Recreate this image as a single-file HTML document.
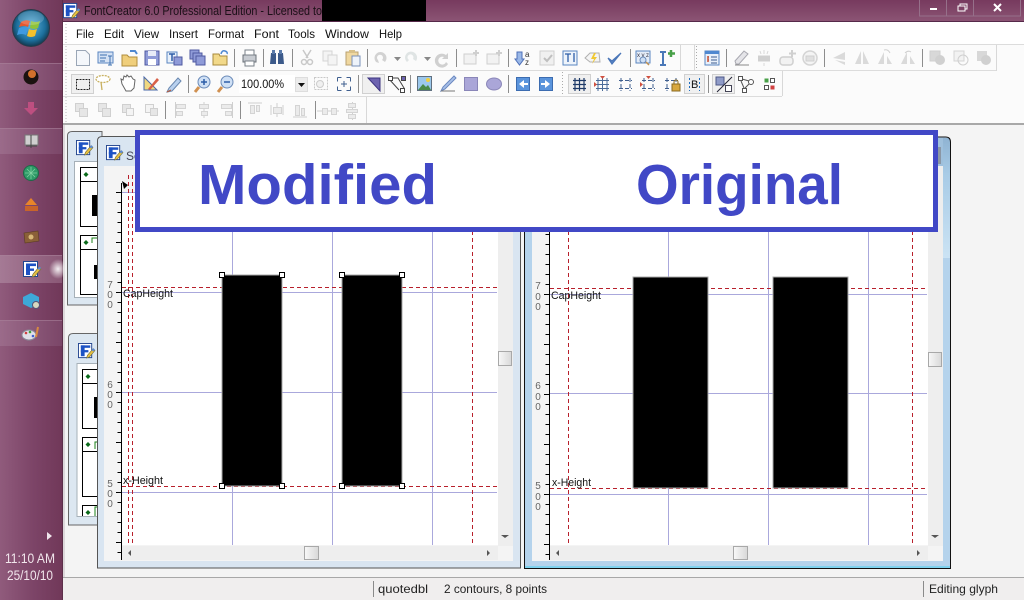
<!DOCTYPE html>
<html lang="en">
<head>
<meta charset="utf-8">
<title>FontCreator 6.0 Professional Edition</title>
<style>
html,body{margin:0;padding:0;background:#f4f4f4;width:1024px;height:600px;overflow:hidden}
svg{display:block}
text{font-family:"Liberation Sans",sans-serif}
</style>
</head>
<body>
<svg width="1024" height="600" viewBox="0 0 1024 600" xmlns="http://www.w3.org/2000/svg">
<defs>
<linearGradient id="side" x1="0" x2="1" y1="0" y2="0"><stop offset="0" stop-color="#905b7c"/><stop offset=".55" stop-color="#7c4467"/><stop offset="1" stop-color="#713859"/></linearGradient>
<linearGradient id="band" x1="0" x2="1" y1="0" y2="0"><stop offset="0" stop-color="#9b6b8a"/><stop offset="1" stop-color="#7b4668"/></linearGradient>
<linearGradient id="bandF" x1="0" x2="1" y1="0" y2="0"><stop offset="0" stop-color="#a57a95"/><stop offset="1" stop-color="#8a5876"/></linearGradient>
<radialGradient id="glow"><stop offset="0" stop-color="#fff" stop-opacity=".9"/><stop offset="1" stop-color="#fff" stop-opacity="0"/></radialGradient>
<linearGradient id="title" x1="0" x2="0" y1="0" y2="1"><stop offset="0" stop-color="#773a5e"/><stop offset="1" stop-color="#8b5474"/></linearGradient>
<radialGradient id="orb" cx=".5" cy=".45" r=".55"><stop offset="0" stop-color="#5fb3df"/><stop offset=".7" stop-color="#1c6f9c"/><stop offset="1" stop-color="#12384f"/></radialGradient>
<linearGradient id="frameR" x1="0" x2="0" y1="0" y2="1"><stop offset="0" stop-color="#8fb3d2"/><stop offset=".3" stop-color="#a8cbe6"/><stop offset="1" stop-color="#cbe3f4"/></linearGradient>
<linearGradient id="thumb" x1="0" x2="1" y1="0" y2="0"><stop offset="0" stop-color="#f8f8f8"/><stop offset="1" stop-color="#d8d8d8"/></linearGradient>
<symbol id="fc" viewBox="0 0 18 18" overflow="visible">
<rect x=".5" y=".5" width="14" height="15" fill="#fff" stroke="#23458f"/>
<rect x="3" y="2.5" width="10" height="2.6" fill="#1d52c4"/><rect x="3" y="2.5" width="4" height="11.5" fill="#1d52c4"/><rect x="3" y="7.5" width="8" height="2.4" fill="#1d52c4"/>
<path d="M9 16l1-3 6-7 2 2-6 7z" fill="#e8c040" stroke="#6a6a3a" stroke-width=".6"/>
<path d="M14.5 7.5l2-2 1.500 1.500-2 2z" fill="#5a8ad8"/>
</symbol>
</defs>

<!-- page -->
<rect width="1024" height="600" fill="#f4f4f4"/>

<!-- sidebar -->
<rect x="0" y="0" width="62" height="600" fill="url(#side)"/>
<rect x="0" y="63" width="62" height="27" fill="url(#band)"/>
<rect x="0" y="128" width="62" height="26" fill="url(#band)"/>
<rect x="0" y="255" width="62" height="28" fill="url(#bandF)"/>
<rect x="0" y="320" width="62" height="26" fill="url(#band)"/>
<path d="M0 63.500h62M0 128.500h62M0 255.500h62M0 320.500h62" stroke="#a98099" stroke-opacity=".6"/>
<rect x="62" y="0" width="1" height="600" fill="#5d2f4a"/>
<rect x="63" y="0" width="2" height="600" fill="#dcd8da"/>
<ellipse cx="58" cy="269" rx="9" ry="10" fill="url(#glow)"/>
<!-- orb -->
<circle cx="31" cy="28" r="18.500" fill="url(#orb)" stroke="#2b3a48"/>
<path d="M21 22q5-3 9-1l-2 6q-4-2-9 0z" fill="#e4572e"/>
<path d="M31 21q5 2 9 0l-2 7q-4 2-8 0z" fill="#8fc33a"/>
<path d="M19 28q5-2 9 0l-2 7q-4-2-9 0z" fill="#3f9ae0"/>
<path d="M29 29q4 2 8 0l-2 7q-4 2-8 0z" fill="#f5c12c"/>
<ellipse cx="31" cy="18" rx="13" ry="7" fill="#fff" opacity=".18"/>
<!-- sidebar icons -->
<circle cx="31" cy="77" r="7.500" fill="#1a1210"/><circle cx="32" cy="74" r="4" fill="#d2702c"/>
<path d="M28 102h6v6h4l-7 7-7-7h4z" fill="#bd4f80"/>
<rect x="25" y="135" width="13" height="10" fill="#cfcfcf" stroke="#777"/><path d="M31 135v13M26 146h11" stroke="#444" fill="none"/>
<circle cx="31" cy="173" r="7.500" fill="#2f9a68" stroke="#1d6a48"/><path d="M31 167v12M25 173h12M27 169l8 8M35 169l-8 8" stroke="#7fd0a0" stroke-width=".8"/>
<path d="M31 198l6 7h-12z" fill="#e8852a"/><rect x="25" y="206" width="13" height="5" fill="#c8642a"/>
<path d="M24 233l14-2 1 10-14 2z" fill="#8a6038" stroke="#5a3c20" stroke-width=".6"/><circle cx="31" cy="237" r="2.500" fill="#d8b878"/>
<use href="#fc" x="23" y="261" width="18" height="18"/>
<path d="M23 297l8-4 8 4v7l-8 4-8-4z" fill="#3ea8d8"/><circle cx="36" cy="305" r="3.500" fill="#d8d8c0" stroke="#557"/>
<ellipse cx="29" cy="335" rx="7" ry="5" fill="#e0e0e8" stroke="#8a8a98"/><circle cx="26" cy="333" r="1.300" fill="#d04040"/><circle cx="30" cy="332" r="1.300" fill="#40a040"/><circle cx="33" cy="336" r="1.300" fill="#4060d0"/><path d="M36 337l2-10" stroke="#d88a40" stroke-width="2"/>
<path d="M47 532l5 4-5 4z" fill="#f0e6ec"/>
<text x="30" y="563" text-anchor="middle" font-size="13.500" fill="#f1e6ec" textLength="50" lengthAdjust="spacingAndGlyphs">11:10 AM</text>
<text x="30" y="580" text-anchor="middle" font-size="13.500" fill="#f1e6ec" textLength="46" lengthAdjust="spacingAndGlyphs">25/10/10</text>

<!-- title bar -->
<rect x="63" y="0" width="961" height="21" fill="url(#title)"/>
<rect x="63" y="21" width="961" height="1" fill="#56294a"/>
<use href="#fc" x="63" y="3" width="17" height="17"/>
<text x="84" y="15" font-size="13" fill="#1c1018" textLength="238" lengthAdjust="spacingAndGlyphs">FontCreator 6.0 Professional Edition - Licensed to</text>
<rect x="322" y="0" width="104" height="21" fill="#000"/>
<path d="M919.500 0v16h101V0M946.500 0v16M973.500 0v16" fill="none" stroke="#96708a"/>
<rect x="930" y="8" width="7" height="2" fill="#fff"/>
<rect x="958" y="6" width="7" height="5" fill="none" stroke="#fff"/><path d="M960 6V4h7v5h-2" fill="none" stroke="#fff"/>
<path d="M994 4l7 7M1001 4l-7 7" stroke="#fff" stroke-width="2"/>

<!-- menu -->
<rect x="63" y="22" width="961" height="23" fill="#fff"/>
<path d="M66 24v20" stroke="#bbb" stroke-dasharray="1 2"/>
<g font-size="12" fill="#111">
<text x="76" y="38" textLength="18" lengthAdjust="spacingAndGlyphs">File</text>
<text x="104" y="38" textLength="20" lengthAdjust="spacingAndGlyphs">Edit</text>
<text x="134" y="38" textLength="25" lengthAdjust="spacingAndGlyphs">View</text>
<text x="169" y="38" textLength="29" lengthAdjust="spacingAndGlyphs">Insert</text>
<text x="208" y="38" textLength="36" lengthAdjust="spacingAndGlyphs">Format</text>
<text x="254" y="38" textLength="25" lengthAdjust="spacingAndGlyphs">Font</text>
<text x="288" y="38" textLength="27" lengthAdjust="spacingAndGlyphs">Tools</text>
<text x="325" y="38" textLength="44" lengthAdjust="spacingAndGlyphs">Window</text>
<text x="379" y="38" textLength="23" lengthAdjust="spacingAndGlyphs">Help</text>
</g>

<!-- toolbars background -->
<rect x="63" y="45" width="961" height="78" fill="#fbfbfb"/>
<path d="M63 44.500H1024M63 70.500H996M63 96.500H782" fill="none" stroke="#dcdcdc"/>
<path d="M680.500 45v25M996.500 45v26M782.500 71v25M366.500 97v26M694.500 45v25" fill="none" stroke="#d8d8d8"/>
<rect x="63" y="123" width="961" height="2" fill="#a8a8a8"/>
<path d="M66 46v76" stroke="#bbb" stroke-dasharray="1 2"/>
<path d="M696.500 46v23M562.500 72v23" stroke="#aaa" stroke-dasharray="1 2"/>

<!-- separators -->
<path d="M234.500 49v18M263.500 49v18M292.500 49v18M367.500 49v18M456.500 49v18M508.500 49v18M630.500 49v18M726.500 49v18M824.500 49v18M922.500 49v18M188.500 75v18M358.500 75v18M410.500 75v18M508.500 75v18M708.500 75v18M165.500 101v18M240.500 101v18M315.500 101v18" stroke="#8d8d8d"/>

<!-- row 1 icons -->
<path d="M76.500 50.500h9l4 4v11h-13z" fill="#f4f7fb" stroke="#9aa6b6"/>
<rect x="98" y="52" width="15" height="11" fill="#d5e2f4" stroke="#5a86c0"/><path d="M100 55h7M100 58h6M100 61h5M110 56v9M108 56h4M108 65h4" stroke="#3d70b0"/>
<path d="M122 55h5l2 2h8v9h-15z" fill="#f0cf7c" stroke="#b08d3c"/><path d="M130 51h5l2 3" fill="none" stroke="#4f88d0" stroke-width="2"/>
<rect x="145" y="51" width="14" height="14" fill="#8f9bd8" stroke="#4f5aa0"/><rect x="148" y="51" width="8" height="5" fill="#e8ecf8"/><rect x="148" y="59" width="8" height="6" fill="#fff"/>
<rect x="167" y="52" width="10" height="11" fill="#e8f0fa" stroke="#5a86c0"/><path d="M169 54h6M172 54v7" stroke="#2d5da8" stroke-width="1.500"/><rect x="174" y="57" width="8" height="8" fill="#8f9bd8" stroke="#4f5aa0"/>
<rect x="190" y="50" width="9" height="9" fill="#8f9bd8" stroke="#4f5aa0"/><rect x="193" y="53" width="9" height="9" fill="#8f9bd8" stroke="#4f5aa0"/><rect x="196" y="56" width="9" height="9" fill="#8f9bd8" stroke="#4f5aa0"/>
<path d="M213 54h6l1 2h7v9h-14z" fill="#f2d98a" stroke="#a88a3c"/><path d="M221 54q1-4 4-3t2 3" fill="none" stroke="#4f88d0" stroke-width="1.500"/>
<rect x="243" y="55" width="13" height="7" fill="#c8ccd2" stroke="#6a7078"/><rect x="245" y="50" width="9" height="5" fill="#fff" stroke="#7a8088"/><rect x="245" y="61" width="9" height="5" fill="#fff" stroke="#7a8088"/>
<path d="M271 53h5v11h-6zM278 53h5l1 11h-6z" fill="#3c5a8a"/><rect x="272" y="50" width="3" height="4" fill="#5a7aaa"/><rect x="279" y="50" width="3" height="4" fill="#5a7aaa"/>
<path d="M303 50l5 8M311 50l-5 8" stroke="#c8c8c8" stroke-width="1.500"/><circle cx="304" cy="62" r="2.500" fill="none" stroke="#c8c8c8" stroke-width="1.500"/><circle cx="310" cy="62" r="2.500" fill="none" stroke="#c8c8c8" stroke-width="1.500"/>
<rect x="323" y="51" width="9" height="10" fill="#f4f4f4" stroke="#d4d4d4"/><rect x="328" y="55" width="9" height="10" fill="#f4f4f4" stroke="#d4d4d4"/>
<rect x="346" y="52" width="12" height="13" fill="#f0d8a0" stroke="#b8a070"/><rect x="349" y="50" width="6" height="3" fill="#d8c088"/><rect x="352" y="56" width="8" height="10" fill="#eef3fa" stroke="#7a90b8"/>
<path d="M376 62a6 6 0 1 1 9 0l-3-2a3 3 0 1 0-4 0l1 3z" fill="#d2d2d2"/><path d="M394 57h7l-3.500 4z" fill="#888"/>
<path d="M407 62a6 6 0 1 1 9-1l-3-2a3 3 0 1 0-4 1z" fill="#dfe4e4"/><path d="M424 57h7l-3.500 4z" fill="#888"/>
<path d="M448 53v6h-6l2-2a4 4 0 1 0 2 5l2 2a7 7 0 1 1-2-9z" fill="#d0d0d0"/>
<rect x="464" y="54" width="12" height="10" fill="#f2f2f2" stroke="#cfcfcf"/><path d="M476 50v6M473 53h6" stroke="#cfcfcf" stroke-width="2"/>
<rect x="487" y="54" width="12" height="10" fill="#f2f2f2" stroke="#cfcfcf"/><path d="M499 50v6M496 53h6" stroke="#cfcfcf" stroke-width="2"/>
<path d="M517 52h5v7h2l-4.500 6-4.500-6h2z" fill="#9ab8e8" stroke="#4f70b8"/><text x="525" y="57" font-size="8" fill="#333">a</text><text x="525" y="65" font-size="8" fill="#333">z</text>
<rect x="540" y="51" width="14" height="14" fill="#f0f0f0" stroke="#cfcfcf"/><path d="M544 58l3 3 5-6" fill="none" stroke="#bfbfbf" stroke-width="2"/>
<rect x="563" y="51" width="14" height="14" fill="#eef4fb" stroke="#5a86c0"/><path d="M565 54h6M568 54v8M574 53v9" stroke="#2d5da8" stroke-width="1.300"/>
<path d="M585 58l5-5h9l1 9h-10z" fill="#f4f4f4" stroke="#b0b0b0"/><path d="M594 53l-3 6h3l-2 5 5-7h-3l2-4z" fill="#f0c830"/>
<path d="M608 58l4 6 9-11-9 8z" fill="#5a86c8" stroke="#4a76b8" stroke-width="1.200"/>
<rect x="636" y="51" width="14" height="12" fill="#e4ecf8" stroke="#5a86c0"/><text x="637" y="57" font-size="6" fill="#334" textLength="12">xyz</text><circle cx="643" cy="60" r="3" fill="#cfe0f5" stroke="#6a8ab8"/><path d="M646 62l3 3" stroke="#c09050" stroke-width="1.500"/>
<path d="M660 52h6M660 65h6M663 52v13" stroke="#4a78b8" stroke-width="2"/><path d="M671 50v7M668 53.500h7" stroke="#48a048" stroke-width="2.500"/>
<!-- right toolbar -->
<rect x="705" y="51" width="14" height="14" fill="#e8f0fa" stroke="#5a86c0"/><rect x="705" y="51" width="14" height="3" fill="#4f88d0"/><path d="M708 57h1M708 60h1M711 57h6M711 60h6M711 63h6" stroke="#3d5d90"/><path d="M708 56v6" stroke="#d05030" stroke-width="1.500"/>
<path d="M735 61l9-10 4 3-9 10h-3z" fill="#e4e4e8" stroke="#a8a8b0"/><path d="M735 65h14" stroke="#8a8a8a"/>
<path d="M758 57h12M758 60h12" stroke="#d0d0d0" stroke-width="3"/><path d="M764 50v4M760 51l1 3M768 51l-1 3M764 63v3" stroke="#d8d8d8"/>
<rect x="780" y="57" width="13" height="8" rx="3" fill="#f2f2f2" stroke="#d0d0d0" stroke-width="1.500"/><path d="M792 50v7M789 53.500h7" stroke="#d0d0d0" stroke-width="2"/>
<circle cx="810" cy="58" r="7" fill="#f4f4f4" stroke="#d4d4d4" stroke-width="1.500"/><rect x="806" y="56" width="8" height="5" fill="#e0e0e0" stroke="#cfcfcf"/>
<path d="M845 52l-12 6 12 2zM845 62l-10-2 10 5z" fill="#dadada"/>
<path d="M861 51l-6 13h6zM863 51l6 13h-6z" fill="#dadada"/>
<path d="M884 52l-6 12h6zM887 56l5 8h-5z" fill="#dadada"/><path d="M884 50q4-1 6 3" fill="none" stroke="#d0d0d0"/>
<path d="M907 52l-6 12h6zM910 56l5 8h-5z" fill="#dadada"/><path d="M905 53q3-3 6-1" fill="none" stroke="#d0d0d0"/>
<rect x="930" y="51" width="10" height="10" fill="#d8d8d8" stroke="#cfcfcf"/><circle cx="940" cy="60" r="5" fill="#d0d0d0"/>
<rect x="954" y="51" width="10" height="10" fill="#f2f2f2" stroke="#d4d4d4"/><circle cx="963" cy="60" r="5" fill="none" stroke="#d0d0d0"/>
<rect x="977" y="51" width="10" height="10" fill="#d8d8d8"/><circle cx="986" cy="60" r="5" fill="#d0d0d0"/>

<!-- row 2 icons -->
<rect x="71.500" y="74.500" width="22" height="19" fill="#f0f0f0" stroke="#d0d0d0"/>
<rect x="76.500" y="79.500" width="13" height="10" fill="none" stroke="#222" stroke-dasharray="2 1"/>
<ellipse cx="103" cy="79" rx="7" ry="3.500" fill="#fff" stroke="#c8b060" stroke-dasharray="2 1" stroke-width="1.300"/><path d="M101 82l1 8" stroke="#c8b060" stroke-width="1.300"/>
<path d="M122 84l-1-5 2 1 1-4 2 1 1-2 2 2 2-1 2 3 2 1-1 8-3 3h-5z" fill="#fff" stroke="#666"/>
<path d="M144 90V77l13 13z" fill="#f0d880" stroke="#4a68a8"/><path d="M148 89l9-11 2 2-9 10z" fill="#d86048"/>
<path d="M167 92l2-4 9-10 3 3-9 10z" fill="#b8d0ee" stroke="#6a88b0"/><path d="M167 92l4-2" stroke="#b85a38"/>
<circle cx="204" cy="82" r="6" fill="#cfe0f5" stroke="#6a8ab8"/><path d="M201 82h6M204 79v6" stroke="#2d5da8" stroke-width="1.500"/><path d="M199 87l-4 5" stroke="#d09050" stroke-width="3"/>
<circle cx="227" cy="82" r="6" fill="#cfe0f5" stroke="#6a8ab8"/><path d="M224 82h6" stroke="#2d5da8" stroke-width="1.500"/><path d="M222 87l-4 5" stroke="#d09050" stroke-width="3"/>
<rect x="239" y="75" width="56" height="18" fill="#fff"/>
<text x="241" y="88" font-size="12" fill="#111" textLength="43" lengthAdjust="spacingAndGlyphs">100.00%</text>
<rect x="295.500" y="77.500" width="12" height="14" fill="#ececec" stroke="#ddd"/><path d="M298 83h7l-3.500 4z" fill="#111"/>
<rect x="314.500" y="77.500" width="13" height="12" fill="none" stroke="#c8c8c8" stroke-dasharray="2 1"/><circle cx="320" cy="84" r="3.500" fill="#f0f0f0" stroke="#ccc"/>
<path d="M337.500 77.500h4M346.500 77.500h4M337.500 90.500h4M346.500 90.500h4M337.500 77.500v4M350.500 77.500v4M337.500 86.500v4M350.500 86.500v4M344 81v6M341 84h6" fill="none" stroke="#3f5f8f"/>
<rect x="362.500" y="74.500" width="22" height="19" fill="#f0f0f0" stroke="#d0d0d0"/>
<path d="M368 78h12v13z" fill="#6d63b0" stroke="#3c3480"/>
<path d="M391 78h7l6 10v3" fill="none" stroke="#444"/><path d="M389 79l10 11" stroke="#444"/><rect x="388.500" y="76.500" width="4" height="4" fill="#fff" stroke="#444"/><rect x="401.500" y="76.500" width="4" height="4" fill="#6d63b0" stroke="#444"/><rect x="400.500" y="88.500" width="4" height="4" fill="#fff" stroke="#444"/>
<rect x="417.500" y="76.500" width="14" height="14" fill="#9cc8ec" stroke="#607080"/><path d="M418 90l5-6 3 3 2-2 3 5z" fill="#4a8a48"/><circle cx="428" cy="80" r="2" fill="#f0d040"/>
<path d="M441 91l2-4 11-11 2 2-11 11z" fill="#a8c0e8" stroke="#6a88c0"/><path d="M441 91h14" stroke="#777"/>
<rect x="464.500" y="77.500" width="13" height="13" fill="#aaa6d8" stroke="#8a86b8"/>
<ellipse cx="494" cy="84" rx="7.500" ry="6" fill="#aaa6d8" stroke="#8a86b8"/>
<rect x="516.500" y="77.500" width="13" height="13" fill="#5a94dc" stroke="#3c6cb0"/><path d="M519 84l5-4v3h4v2h-4v3z" fill="#fff"/>
<rect x="539.500" y="77.500" width="13" height="13" fill="#5a94dc" stroke="#3c6cb0"/><path d="M550 84l-5-4v3h-4v2h4v3z" fill="#fff"/>
<rect x="568.500" y="74.500" width="22" height="19" fill="#f0f0f0" stroke="#d0d0d0"/>
<path d="M575 78v13M579.500 78v13M584 78v13M573 80.500h13M573 84.500h13M573 88.500h13" stroke="#1e3a68" stroke-width="1.200"/>
<path d="M598 78v13M602.500 78v13M607 78v13M596 80.500h13M596 84.500h13M596 88.500h13" stroke="#4a6a98"/><path d="M600 76h5l-2.500 3z" fill="#d05040"/><path d="M594 82v5l3-2.500z" fill="#d05040"/>
<path d="M621 78v13M630 78v13M619 80.500h13M619 88.500h13" stroke="#3f5f8f" stroke-dasharray="4 2"/>
<path d="M644 78v13M653 78v13M642 80.500h13M642 88.500h13" stroke="#3f5f8f" stroke-dasharray="4 2"/><path d="M646 76h5l-2.500 3z" fill="#d05040"/><path d="M640 82v5l3-2.500z" fill="#d05040"/>
<path d="M667 78v13M676 78v8M665 80.500h13M665 88.500h5" stroke="#3f5f8f" stroke-dasharray="4 2"/><rect x="672" y="84" width="8" height="7" fill="#d8a840" stroke="#8a6a20"/><path d="M674 84v-2a2 2 0 0 1 4 0v2" fill="none" stroke="#8a6a20"/>
<rect x="684.500" y="74.500" width="20" height="19" fill="#f0f0f0" stroke="#d0d0d0"/>
<path d="M689.500 78v13M699.500 78v13" stroke="#1f6fc0" stroke-dasharray="2 2"/><text x="691" y="88" font-size="11" fill="#111">B</text>
<rect x="712.500" y="74.500" width="22" height="19" fill="#f0f0f0" stroke="#d0d0d0"/>
<rect x="716" y="77" width="8" height="8" fill="#8f9bc8" stroke="#4f5a88"/><path d="M717 92l15-15" stroke="#223"/><rect x="725.500" y="85.500" width="6" height="6" fill="#fff" stroke="#445"/>
<rect x="738.500" y="76.500" width="4" height="4" fill="#fff" stroke="#555"/><circle cx="751" cy="82" r="2.500" fill="#fff" stroke="#555"/><rect x="742.500" y="88.500" width="4" height="4" fill="#fff" stroke="#555"/><path d="M742 79l7 2M741 81l3 7M749 84l-4 4" stroke="#555"/>
<rect x="764.500" y="78.500" width="4" height="4" fill="#48a048"/><rect x="770.500" y="78.500" width="4" height="4" fill="#fff" stroke="#555"/><rect x="764.500" y="85.500" width="4" height="4" fill="#fff" stroke="#555"/><rect x="770.500" y="85.500" width="4" height="4" fill="#d04040"/>

<!-- row 3 icons -->
<g fill="#e6e6e6" stroke="#d0d0d0">
<rect x="75.500" y="103.500" width="8" height="8"/><rect x="79.500" y="108.500" width="8" height="8"/>
<rect x="98.500" y="103.500" width="8" height="8"/><rect x="102.500" y="108.500" width="8" height="8"/>
<rect x="122.500" y="104.500" width="8" height="8"/><rect x="126.500" y="108.500" width="7" height="7" fill="#f4f4f4"/>
<rect x="145.500" y="104.500" width="8" height="8" fill="#f4f4f4"/><rect x="150.500" y="108.500" width="7" height="7"/>
</g>
<path d="M175.500 102v16M204 102v16M232.500 102v16M248 103h14M271 105v10M277 103v14M283 105v10M293 117h14M317 111h22M352.500 102v18" stroke="#cfcfcf" fill="none"/>
<g fill="#ebebeb" stroke="#d4d4d4">
<rect x="176.500" y="104.500" width="9" height="4"/><rect x="176.500" y="111.500" width="6" height="4"/>
<rect x="199.500" y="104.500" width="9" height="4"/><rect x="201.500" y="111.500" width="6" height="4"/>
<rect x="221.500" y="104.500" width="10" height="4"/><rect x="225.500" y="111.500" width="6" height="4"/>
<rect x="250.500" y="105.500" width="4" height="8"/><rect x="256.500" y="105.500" width="3" height="6"/>
<rect x="273.500" y="107.500" width="8" height="6"/>
<rect x="295.500" y="105.500" width="4" height="10"/><rect x="301.500" y="108.500" width="3" height="7"/>
<rect x="322.500" y="108.500" width="5" height="6"/><rect x="331.500" y="108.500" width="5" height="6"/>
<rect x="348.500" y="103.500" width="7" height="4"/><rect x="346.500" y="109.500" width="11" height="3"/><rect x="348.500" y="114.500" width="7" height="4"/>
</g>

<!-- back window 1 -->
<path d="M72 131.500h30v173.500H67.500V136q0-4.500 4.500-4.500z" fill="#dce7f1" stroke="#666"/>
<rect x="74.500" y="161.500" width="30" height="136" fill="#fff" stroke="#a6b0b8"/>
<use href="#fc" x="76" y="140" width="17" height="17"/>
<path d="M97 167.500H80.500v59H97M80.500 181.500H97M97 235.500H80.500v59H97M80.500 249.500H97" fill="none" stroke="#000"/>
<path d="M86 172l2.500 2.500L86 177l-2.500-2.500z" fill="#0a6a1a"/><path d="M86 240l2.500 2.500L86 245l-2.500-2.500z" fill="#0a6a1a"/>
<path d="M92 243v-5h5" stroke="#1a801a" fill="none"/>
<rect x="92" y="195" width="5" height="21" fill="#000"/><rect x="94" y="265" width="3" height="14" fill="#000"/>

<!-- back window 2 -->
<path d="M73 333.500h30v191.500H68.500V338q0-4.500 4.500-4.500z" fill="#dce7f1" stroke="#666"/>
<rect x="77" y="363.500" width="28" height="153" fill="#fff" stroke="#a6b0b8"/>
<use href="#fc" x="78" y="343" width="17" height="17"/>
<path d="M97 369.500H82.500v59H97M82.500 383.500H97M97 437.500H82.500v59H97M82.500 451.500H97M97 505.500H82.500V516M82.500 516" fill="none" stroke="#000"/>
<path d="M88 374l2.500 2.500L88 379l-2.500-2.500zM88 442l2.500 2.500L88 447l-2.500-2.500zM88 510l2.500 2.500L88 515l-2.500-2.500z" fill="#0a6a1a"/>
<path d="M95 449v-7h2M95 516v-9h2" stroke="#1a801a" fill="none"/>
<rect x="94" y="397" width="3" height="21" fill="#000"/>

<!-- window 3 Modified -->
<path d="M102 136.500h418.500V568H97.500V141q0-4.500 4.500-4.500z" fill="#d9e5f1" stroke="#555"/>
<rect x="104" y="166" width="409" height="395" fill="#f4f4f4"/>
<use href="#fc" x="106" y="145" width="17" height="17"/>
<text x="126" y="160" font-size="12" fill="#445">Se</text>
<rect x="122" y="192" width="376" height="353" fill="#fff"/>
<rect x="498" y="166" width="15" height="380" fill="#eeeeee"/>
<rect x="122" y="546" width="376" height="14" fill="#eeeeee"/>
<path d="M232.500 192V545M332.500 192V545M432.500 192V545M122 292.500H497M122 392.500H497M122 492.500H497M122 192.500H497" stroke="#aaa8dc"/>
<path d="M128.500 175V545M132.500 175V545M472.500 175V545" stroke="#b8202c" stroke-dasharray="4 3"/>
<path d="M122 287.500H497M122 486.500H497" stroke="#b8202c" stroke-dasharray="4 3"/>
<rect x="222" y="275" width="60" height="211" fill="#000" stroke="#a8a8a8"/>
<rect x="342" y="275" width="60" height="211" fill="#000" stroke="#a8a8a8"/>
<g fill="#fff" stroke="#000">
<rect x="219.500" y="272.500" width="5" height="5"/><rect x="279.500" y="272.500" width="5" height="5"/><rect x="339.500" y="272.500" width="5" height="5"/><rect x="399.500" y="272.500" width="5" height="5"/>
<rect x="219.500" y="483.500" width="5" height="5"/><rect x="279.500" y="483.500" width="5" height="5"/><rect x="339.500" y="483.500" width="5" height="5"/><rect x="399.500" y="483.500" width="5" height="5"/>
</g>
<path d="M121.500 183V560" stroke="#000"/>
<line x1="119.500" y1="192" x2="119.500" y2="560" stroke="#000" stroke-width="4" stroke-dasharray="1 9"/>
<path d="M116 192.500h6M116 242.500h6M116 292.500h6M116 342.500h6M116 392.500h6M116 442.500h6M116 492.500h6M116 542.500h6" stroke="#000"/>
<path d="M122 181l6 4-4 4z" fill="#000"/>
<g font-size="10" fill="#666" text-anchor="middle">
<text x="110" y="288">7</text><text x="110" y="298">0</text><text x="110" y="308">0</text>
<text x="110" y="388">6</text><text x="110" y="398">0</text><text x="110" y="408">0</text>
<text x="110" y="487">5</text><text x="110" y="497">0</text><text x="110" y="507">0</text>
</g>
<text x="123" y="297" font-size="11" fill="#111" textLength="50" lengthAdjust="spacingAndGlyphs">CapHeight</text>
<text x="123" y="484" font-size="11" fill="#111" textLength="40" lengthAdjust="spacingAndGlyphs">x-Height</text>
<rect x="498.500" y="351.500" width="13" height="14" fill="url(#thumb)" stroke="#a8a8a8"/>
<rect x="304.500" y="546.500" width="14" height="13" fill="url(#thumb)" stroke="#a8a8a8"/>
<path d="M501 535h8l-4 3z" fill="#555"/><path d="M131 550v6l-3-3zM487 550v6l3-3z" fill="#555"/>

<!-- window 4 Original -->
<path d="M525 137.500H945q5 0 5 5V568.500H525z" fill="#b5d3ec"/>
<rect x="525" y="138" width="425" height="28" fill="#9fc0dc"/>
<rect x="943" y="138" width="7" height="120" fill="url(#frameR)"/>
<rect x="938" y="147" width="3" height="17" fill="#8a96a4"/>
<path d="M524.500 137V568.500H950.500V142q0-5-5-5H930" fill="none" stroke="#111"/>
<rect x="525" y="566" width="425" height="2" fill="#7fd2ee"/>
<rect x="532" y="166" width="411" height="395" fill="#f4f4f4"/>
<rect x="550" y="192" width="378" height="353" fill="#fff"/>
<rect x="928" y="166" width="15" height="380" fill="#eeeeee"/>
<rect x="550" y="546" width="378" height="14" fill="#eeeeee"/>
<path d="M668.500 192V545M768.500 192V545M868.500 192V545M550 294.500H927M550 393.500H927M550 494.500H927" stroke="#aaa8dc"/>
<path d="M568.500 175V545M912.500 175V545" stroke="#b8202c" stroke-dasharray="4 3"/>
<path d="M550 288.500H927M550 488.500H927" stroke="#b8202c" stroke-dasharray="4 3"/>
<rect x="633" y="277" width="75" height="211" fill="#000" stroke="#a8a8a8"/>
<rect x="773" y="277" width="75" height="211" fill="#000" stroke="#a8a8a8"/>
<path d="M549.500 183V560" stroke="#000"/>
<line x1="547.500" y1="194" x2="547.500" y2="560" stroke="#000" stroke-width="4" stroke-dasharray="1 9"/>
<path d="M544 294.500h6M544 344.500h6M544 394.500h6M544 444.500h6M544 494.500h6M544 544.500h6" stroke="#000"/>
<g font-size="10" fill="#666" text-anchor="middle">
<text x="538" y="289">7</text><text x="538" y="300">0</text><text x="538" y="310">0</text>
<text x="538" y="389">6</text><text x="538" y="400">0</text><text x="538" y="410">0</text>
<text x="538" y="489">5</text><text x="538" y="500">0</text><text x="538" y="510">0</text>
</g>
<text x="551" y="299" font-size="11" fill="#111" textLength="50" lengthAdjust="spacingAndGlyphs">CapHeight</text>
<text x="552" y="486" font-size="11" fill="#111" textLength="39" lengthAdjust="spacingAndGlyphs">x-Height</text>
<rect x="928.500" y="352.500" width="13" height="14" fill="url(#thumb)" stroke="#a8a8a8"/>
<rect x="733.500" y="546.500" width="14" height="13" fill="url(#thumb)" stroke="#a8a8a8"/>
<path d="M931 535h8l-4 3z" fill="#555"/><path d="M559 550v6l-3-3zM917 550v6l3-3z" fill="#555"/>

<!-- banner -->
<rect x="137.500" y="132.500" width="798" height="97" fill="#fff" stroke="#4148c6" stroke-width="5"/>
<text x="198" y="204" font-size="57" font-weight="700" fill="#4148c6" textLength="239" lengthAdjust="spacingAndGlyphs">Modified</text>
<text x="636" y="204" font-size="57" font-weight="700" fill="#4148c6" textLength="207" lengthAdjust="spacingAndGlyphs">Original</text>

<!-- status bar -->
<rect x="63" y="578" width="961" height="22" fill="#f0eeee"/>
<rect x="63" y="577" width="961" height="1" fill="#a8a8a8"/>
<path d="M373.500 581v16M923.500 581v16" stroke="#8a8a8a"/>
<g font-size="12" fill="#222">
<text x="378" y="593" textLength="50" lengthAdjust="spacingAndGlyphs">quotedbl</text>
<text x="444" y="593" textLength="103" lengthAdjust="spacingAndGlyphs">2 contours, 8 points</text>
<text x="929" y="593" textLength="69" lengthAdjust="spacingAndGlyphs">Editing glyph</text>
</g>
</svg>
</body>
</html>
